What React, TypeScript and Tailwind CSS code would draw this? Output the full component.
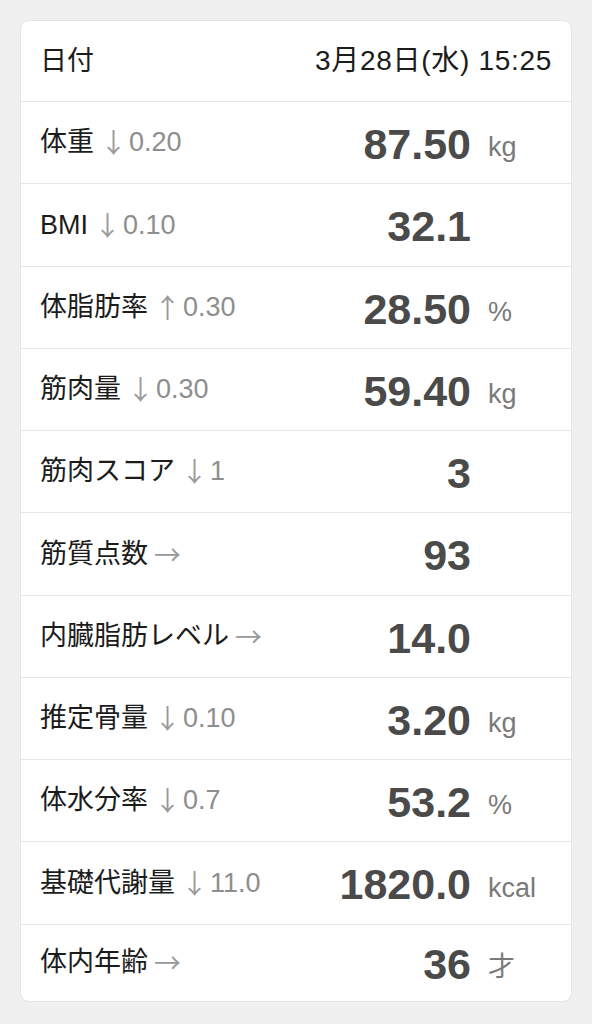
import React from "react";

type Row = { label: string; arrow?: string; delta?: string; value: string; unit?: string };

const rows: Row[] = [
  { label: "体重", arrow: "↓", delta: "0.20", value: "87.50", unit: "kg" },
  { label: "BMI", arrow: "↓", delta: "0.10", value: "32.1" },
  { label: "体脂肪率", arrow: "↑", delta: "0.30", value: "28.50", unit: "%" },
  { label: "筋肉量", arrow: "↓", delta: "0.30", value: "59.40", unit: "kg" },
  { label: "筋肉スコア", arrow: "↓", delta: "1", value: "3" },
  { label: "筋質点数", arrow: "→", value: "93" },
  { label: "内臓脂肪レベル", arrow: "→", value: "14.0" },
  { label: "推定骨量", arrow: "↓", delta: "0.10", value: "3.20", unit: "kg" },
  { label: "体水分率", arrow: "↓", delta: "0.7", value: "53.2", unit: "%" },
  { label: "基礎代謝量", arrow: "↓", delta: "11.0", value: "1820.0", unit: "kcal" },
  { label: "体内年齢", arrow: "→", value: "36", unit: "才" },
];

const font = { fontFamily: '"Liberation Sans", "Noto Sans CJK JP", sans-serif' };

export default function App() {
  return (
    <div className="min-h-[1024px] w-[592px] bg-[#f0f0f0] p-[20px]" style={font}>
      <div className="overflow-hidden rounded-[9px] border border-[#e4e4e4] bg-white">
        <div className="flex h-[80px] items-center justify-between pl-[19px] pr-[19px] text-[27px] text-[#1c1c1c]">
          <span>日付</span>
          <span className="text-[28px] tracking-[0.7px]">3月28日(水) 15:25</span>
        </div>
        {rows.map((r, i) => (
          <div
            key={r.label}
            className={`flex items-center border-t border-[#e6e6e6] pl-[19px] pr-[19px] ${
              i === rows.length - 1 ? "h-[77px]" : "h-[82.25px]"
            }`}
          >
            <div className="flex flex-1 items-center text-[27px]">
              <span className="text-[#1c1c1c]">{r.label}</span>
              {r.arrow && (
                <span className="ml-[6px] text-[#9a9a9a]" style={{ fontFamily: '"Noto Sans CJK JP", sans-serif' }}>
                  {r.arrow}
                </span>
              )}
              {r.delta && <span className="ml-[2px] text-[#8e8e8e]">{r.delta}</span>}
            </div>
            <div className="pt-[4px] text-right text-[43px] font-bold leading-none text-[#4a4a4a]">{r.value}</div>
            <div className="w-[81px] pl-[17px] pt-[10px] text-[27px] text-[#7a7a7a]">{r.unit ?? ""}</div>
          </div>
        ))}
      </div>
    </div>
  );
}
